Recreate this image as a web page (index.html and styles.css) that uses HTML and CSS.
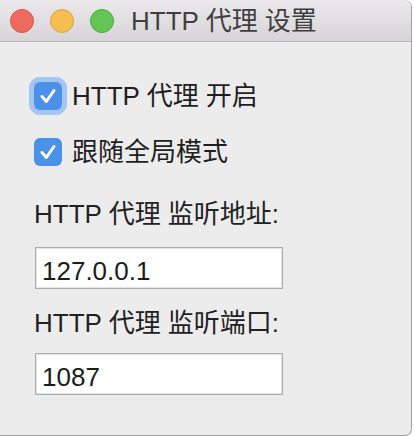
FILE: index.html
```html
<!DOCTYPE html>
<html lang="zh-CN">
<head>
<meta charset="utf-8">
<title>HTTP 代理 设置</title>
<link rel="stylesheet" href="styles.css">
</head>
<body>
<div class="window">
  <header class="titlebar">
    <div class="lights">
      <span class="light red"></span>
      <span class="light yellow"></span>
      <span class="light green"></span>
    </div>
    <div class="title">HTTP 代理 设置</div>
  </header>
  <main class="content">
    <label class="check-row focused">
      <span class="checkbox">
        <svg viewBox="0 0 28 28" width="28" height="28"><path d="M8 14.5 L12.3 19.5 L20 8.5" fill="none" stroke="#fff" stroke-width="3" stroke-linecap="round" stroke-linejoin="round"/></svg>
      </span>
      <span class="check-label">HTTP 代理 开启</span>
    </label>
    <label class="check-row second">
      <span class="checkbox">
        <svg viewBox="0 0 28 28" width="28" height="28"><path d="M8 14.5 L12.3 19.5 L20 8.5" fill="none" stroke="#fff" stroke-width="3" stroke-linecap="round" stroke-linejoin="round"/></svg>
      </span>
      <span class="check-label">跟随全局模式</span>
    </label>
    <div class="field-label first">HTTP 代理 监听地址:</div>
    <input class="field" type="text" value="127.0.0.1">
    <div class="field-label second">HTTP 代理 监听端口:</div>
    <input class="field" type="text" value="1087">
  </main>
</div>
</body>
</html>
```

FILE: styles.css
```css
html, body {
  margin: 0;
  padding: 0;
  background: #ffffff;
}

body {
  font-family: "Liberation Sans", "Noto Sans CJK SC", sans-serif;
  font-size: 26px;
  color: #222222;
}

.window {
  width: 411px;
  height: 435px;
  border-right: 1px solid #a2a2a2;
  border-bottom: 1px solid #a2a2a2;
  border-radius: 0 7px 7px 0;
  overflow: hidden;
  background: #ececec;
  display: flex;
  flex-direction: column;
}

.titlebar {
  height: 41px;
  border-bottom: 1px solid #bdbbbd;
  background: linear-gradient(#ebe9eb, #d6d4d6);
  display: flex;
  align-items: center;
  flex-shrink: 0;
}

.lights {
  display: flex;
  gap: 16px;
  padding-left: 10px;
}

.light {
  width: 24px;
  height: 24px;
  border-radius: 50%;
  box-sizing: border-box;
}

.red { background: #ee6a5f; border: 1px solid #d6564b; }
.yellow { background: #f6be50; border: 1px solid #dba343; }
.green { background: #62c554; border: 1px solid #51a93e; }

.title {
  margin-left: 17px;
  color: #3f3f3f;
  line-height: 30px;
  margin-top: 1px;
}

.content {
  flex: 1;
  display: flex;
  flex-direction: column;
  align-items: flex-start;
  padding: 40px 0 0 34px;
}

.check-row {
  display: flex;
  align-items: center;
  gap: 10px;
  height: 28px;
}

.check-row.second {
  margin-top: 28px;
}

.checkbox {
  width: 28px;
  height: 28px;
  border-radius: 6px;
  background: #4b91ea;
  display: flex;
}

.focused .checkbox {
  box-shadow: 0 0 0 5px #a6c6f2;
}

.check-label {
  line-height: 30px;
  color: #1f1f1f;
}

.field-label {
  line-height: 30px;
  color: #222222;
}

.field-label.first {
  margin-top: 33px;
}

.field-label.second {
  margin-top: 19px;
}

.field {
  margin: 18px 0 0 1px;
  width: 248px;
  height: 42px;
  box-sizing: border-box;
  border: 1px solid #acacac;
  box-shadow: inset 0 0 0 1px #e4e4e4;
  background: #ffffff;
  padding: 8px 6px 2px 6px;
  font: inherit;
  color: #1c1c1c;
  outline: none;
}

.field-label.second + .field {
  margin-top: 15px;
}
```
